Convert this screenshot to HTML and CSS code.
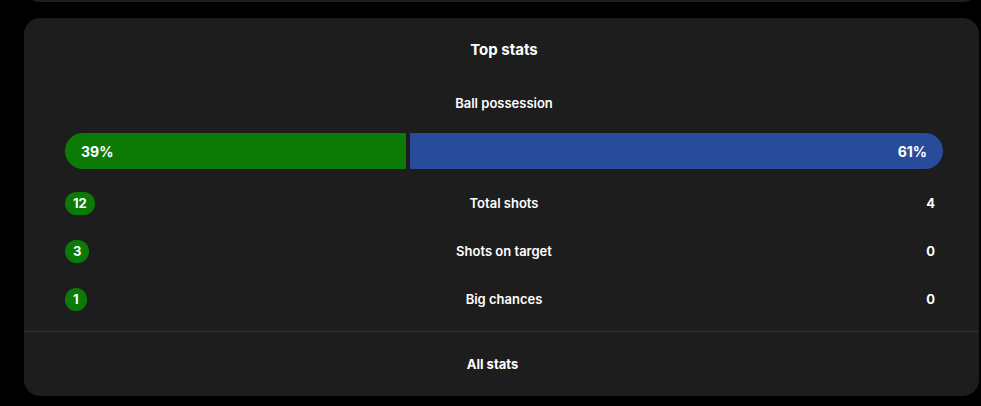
FILE: index.html
```html
<!DOCTYPE html>
<html>
<head>
<meta charset="utf-8">
<link rel="stylesheet" href="styles.css">
</head>
<body>
<div class="page">
  <div class="prev-card"></div>
  <section class="card">
    <div class="card-body">
      <h2 class="title">Top stats</h2>
      <div class="possession-label">Ball possession</div>
      <div class="bar">
        <div class="bar-home" style="flex-basis: calc((100% - 4px) * 0.39)">39%</div>
        <div class="bar-away">61%</div>
      </div>
      <div class="rows">
        <div class="row">
          <span class="val val-home">12</span>
          <span class="label">Total shots</span>
          <span class="val val-away">4</span>
        </div>
        <div class="row">
          <span class="val val-home">3</span>
          <span class="label">Shots on target</span>
          <span class="val val-away">0</span>
        </div>
        <div class="row">
          <span class="val val-home">1</span>
          <span class="label">Big chances</span>
          <span class="val val-away">0</span>
        </div>
      </div>
    </div>
    <div class="footer">All stats</div>
  </section>
</div>
</body>
</html>
```

FILE: styles.css
```css
* { box-sizing: border-box; }
html, body {
  margin: 0;
  padding: 0;
  background: #000;
}
body {
  font-family: Inter, "Noto Sans", sans-serif;
  color: #fff;
  width: 981px;
  height: 406px;
  overflow: hidden;
}
.page {
  display: flex;
  flex-direction: column;
  padding-left: 24px;
  padding-right: 2px;
}
.prev-card {
  height: 20px;
  margin-top: -18px;
  margin-bottom: 16px;
  background: #1f1f1f;
  border-radius: 0 0 16px 16px;
}
.card {
  background: #1d1d1d;
  border-radius: 16px;
  height: 378px;
  display: flex;
  flex-direction: column;
}
.card-body {
  padding: 22px 36px 8px 41px;
  display: flex;
  flex-direction: column;
  align-items: stretch;
  border-bottom: 1px solid #333;
}
.title {
  margin: 0;
  font-size: 15px;
  line-height: 20px;
  font-weight: 700;
  text-align: center;
}
.possession-label {
  margin-top: 34px;
  font-size: 13px;
  line-height: 18px;
  font-weight: 600;
  text-align: center;
}
.bar {
  margin-top: 21px;
  height: 36px;
  display: flex;
  gap: 4px;
  font-size: 14px;
  font-weight: 700;
}
.bar-home, .bar-away {
  display: flex;
  align-items: center;
  padding: 0 16px;
}
.bar-home {
  flex-grow: 0;
  flex-shrink: 0;
  background: #0b7a07;
  border-radius: 18px 0 0 18px;
}
.bar-away {
  flex: 1 1 0;
  background: #284b9b;
  border-radius: 0 18px 18px 0;
  justify-content: flex-end;
}
.rows {
  margin-top: 10px;
  display: flex;
  flex-direction: column;
}
.row {
  height: 48px;
  display: grid;
  grid-template-columns: 1fr auto 1fr;
  align-items: center;
}
.label {
  font-size: 13px;
  font-weight: 600;
  text-align: center;
}
.val {
  font-size: 13px;
  font-weight: 700;
  height: 23px;
  line-height: 23px;
  padding: 0 8px;
  border-radius: 12px;
}
.val-home {
  justify-self: start;
  background: #0b7a07;
}
.val-away {
  justify-self: end;
}
.footer {
  flex: 1;
  display: flex;
  align-items: center;
  justify-content: center;
  padding-right: 18px;
  font-size: 13px;
  font-weight: 700;
}
```
